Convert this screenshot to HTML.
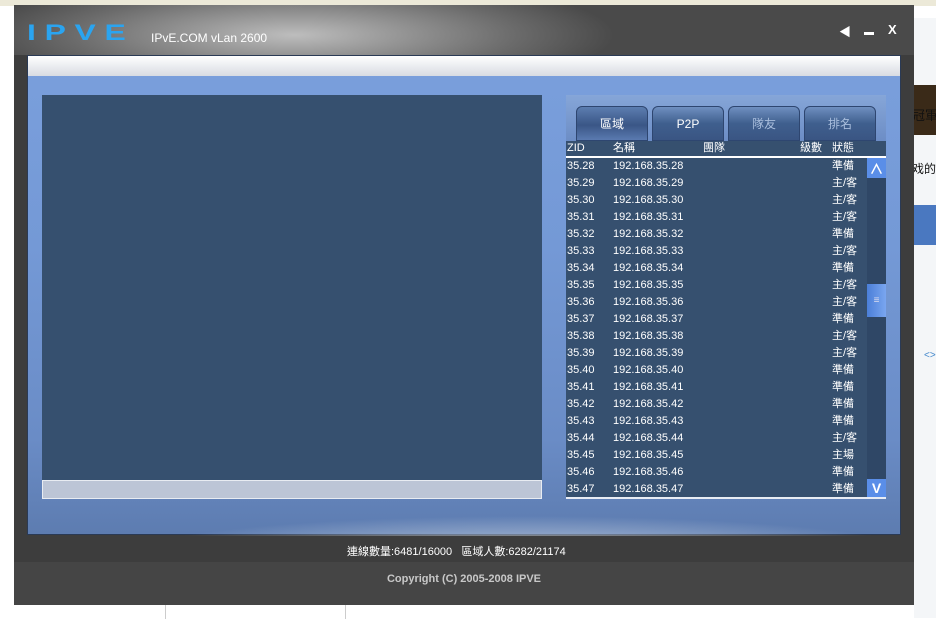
<!DOCTYPE html>
<html><head><meta charset="utf-8"><style>
*{margin:0;padding:0;box-sizing:border-box}
body{width:936px;height:619px;overflow:hidden;position:relative;background:#fff;font-family:"Liberation Sans","Noto Sans CJK TC",sans-serif}
.a{position:absolute;white-space:nowrap}
.win{left:14px;top:5px;width:900px;height:600px;background:#3d3d3d}
.row{position:absolute;left:0;width:300px;height:17px;font-size:11px;color:#fff;line-height:17px}
.row span{position:absolute}
.tab{position:absolute;top:106px;width:72px;height:35px;border-radius:6px 6px 0 0;background:linear-gradient(#6f8fc0,#3f5f8e 50%,#3a5583);border:1px solid #2e4670;color:#a9bedd;font-size:12px;text-align:center;line-height:34px}
</style></head><body>
<div class="a" style="left:0;top:0;width:936px;height:6px;background:#ece9d8"></div>
<div class="a" style="left:914px;top:18px;width:22px;height:600px;background:#f4f6f8;overflow:hidden">
 <div class="a" style="left:0;top:67px;width:22px;height:50px;background:#3a2a18"></div>
 <div class="a" style="left:0;top:187px;width:22px;height:40px;background:#4a78c0"></div>
 <div class="a" style="left:-2px;top:87px;font-size:13px;color:#111">冠軍</div>
 <div class="a" style="left:-2px;top:142px;font-size:12px;color:#111">戏的</div>
 <div class="a" style="left:10px;top:332px;font-size:10px;color:#48c">&lt;&gt;</div>
</div>
<div class="a" style="left:165px;top:605px;width:1px;height:14px;background:#ccc"></div>
<div class="a" style="left:345px;top:605px;width:1px;height:14px;background:#ccc"></div>
<div class="a win">
 <div class="a" style="left:0;top:0;width:900px;height:50px;background:radial-gradient(ellipse 320px 60px at 280px 30px,#bdbdbd,#6a6a6a 70%,#4a4a4a)"></div>
 <div class="a" style="left:0;top:557px;width:900px;height:43px;background:#454545"></div>
</div>
<div class="a" style="left:27px;top:22px;font:bold 22px/22px 'Liberation Sans';color:#2aa4f0;letter-spacing:6px;transform:scaleX(1.45);transform-origin:0 0">IPVE</div>
<div class="a" style="left:151px;top:31px;font-size:12px;color:#fff">IPvE.COM vLan 2600</div>
<div class="a" style="left:839px;top:23px;font-size:12px;color:#fff;font-weight:bold">◀</div>
<div class="a" style="left:864px;top:32px;width:10px;height:3px;background:#fff"></div>
<div class="a" style="left:888px;top:22px;font-size:13px;color:#fff;font-weight:bold">X</div>
<div class="a" style="left:27px;top:55px;width:874px;height:480px;background:linear-gradient(#7a9fdc,#7499d6 40%,#6a8cc6 80%,#5d7cb0);border:1px solid #2a3a55">
 <div class="a" style="left:0;top:0;width:872px;height:20px;background:linear-gradient(#fff,#d8dbe2)"></div>
 <div class="a" style="left:0;top:420px;width:872px;height:60px;background:radial-gradient(ellipse 500px 50px at 500px 80px,#c3cfe0,rgba(120,145,190,0) 80%)"></div>
</div>
<div class="a" style="left:42px;top:95px;width:500px;height:385px;background:#36506f"></div>
<div class="a" style="left:42px;top:480px;width:500px;height:19px;background:#bcc5d6;border:1px solid #e8ecf2"></div>
<div class="a" style="left:566px;top:95px;width:320px;height:50px;background:linear-gradient(#86a6d8,#6a8bc4)"></div>
<div class="tab" style="left:576px;color:#fff;background:linear-gradient(#5c7db0,#3a5686 55%,#5a7ab0)">區域</div>
<div class="tab" style="left:652px;color:#fff">P2P</div>
<div class="tab" style="left:728px">隊友</div>
<div class="tab" style="left:804px">排名</div>
<div class="a" style="left:566px;top:141px;width:320px;height:356px;background:#36506f"></div>
<div class="a" style="left:566px;top:156px;width:320px;height:2px;background:#fff"></div>
<div class="a" style="left:566px;top:497px;width:320px;height:2px;background:#e8ecf4"></div>
<div class="row" style="left:567px;top:140px"><span style="left:0">ZID</span><span style="left:46px">名稱</span><span style="left:136px">團隊</span><span style="left:233px">級數</span><span style="left:265px">狀態</span></div>
<div class="a" style="left:867px;top:158px;width:19px;height:339px;background:#2f4766"></div>
<div class="a" style="left:867px;top:158px;width:19px;height:20px;background:#5a8ee8;color:#fff;font-weight:bold;font-size:14px;text-align:center;line-height:22px">∧</div>
<div class="a" style="left:867px;top:284px;width:19px;height:33px;background:linear-gradient(90deg,#4b7fd8,#7aa6f0);color:#dde;font-size:10px;text-align:center;line-height:33px">≡</div>
<div class="a" style="left:867px;top:479px;width:19px;height:18px;background:#5a8ee8;color:#fff;font-weight:bold;font-size:14px;text-align:center;line-height:18px">V</div>
<div class="a" style="left:347px;top:543px;font-size:11px;color:#fff">連線數量:6481/16000&nbsp;&nbsp;&nbsp;區域人數:6282/21174</div>
<div class="a" style="left:14px;top:573px;width:900px;text-align:center;font-size:11px;font-weight:bold;color:#c8c8c8">Copyright (C) 2005-2008 IPVE</div>
<div class="a" style="left:567px;top:158px">
<div class="row" style="top:0"><span>35.28</span><span style="left:46px">192.168.35.28</span><span style="left:265px">準備</span></div>
<div class="row" style="top:17px"><span>35.29</span><span style="left:46px">192.168.35.29</span><span style="left:265px">主/客</span></div>
<div class="row" style="top:34px"><span>35.30</span><span style="left:46px">192.168.35.30</span><span style="left:265px">主/客</span></div>
<div class="row" style="top:51px"><span>35.31</span><span style="left:46px">192.168.35.31</span><span style="left:265px">主/客</span></div>
<div class="row" style="top:68px"><span>35.32</span><span style="left:46px">192.168.35.32</span><span style="left:265px">準備</span></div>
<div class="row" style="top:85px"><span>35.33</span><span style="left:46px">192.168.35.33</span><span style="left:265px">主/客</span></div>
<div class="row" style="top:102px"><span>35.34</span><span style="left:46px">192.168.35.34</span><span style="left:265px">準備</span></div>
<div class="row" style="top:119px"><span>35.35</span><span style="left:46px">192.168.35.35</span><span style="left:265px">主/客</span></div>
<div class="row" style="top:136px"><span>35.36</span><span style="left:46px">192.168.35.36</span><span style="left:265px">主/客</span></div>
<div class="row" style="top:153px"><span>35.37</span><span style="left:46px">192.168.35.37</span><span style="left:265px">準備</span></div>
<div class="row" style="top:170px"><span>35.38</span><span style="left:46px">192.168.35.38</span><span style="left:265px">主/客</span></div>
<div class="row" style="top:187px"><span>35.39</span><span style="left:46px">192.168.35.39</span><span style="left:265px">主/客</span></div>
<div class="row" style="top:204px"><span>35.40</span><span style="left:46px">192.168.35.40</span><span style="left:265px">準備</span></div>
<div class="row" style="top:221px"><span>35.41</span><span style="left:46px">192.168.35.41</span><span style="left:265px">準備</span></div>
<div class="row" style="top:238px"><span>35.42</span><span style="left:46px">192.168.35.42</span><span style="left:265px">準備</span></div>
<div class="row" style="top:255px"><span>35.43</span><span style="left:46px">192.168.35.43</span><span style="left:265px">準備</span></div>
<div class="row" style="top:272px"><span>35.44</span><span style="left:46px">192.168.35.44</span><span style="left:265px">主/客</span></div>
<div class="row" style="top:289px"><span>35.45</span><span style="left:46px">192.168.35.45</span><span style="left:265px">主場</span></div>
<div class="row" style="top:306px"><span>35.46</span><span style="left:46px">192.168.35.46</span><span style="left:265px">準備</span></div>
<div class="row" style="top:323px"><span>35.47</span><span style="left:46px">192.168.35.47</span><span style="left:265px">準備</span></div>
</div>
</body></html>
